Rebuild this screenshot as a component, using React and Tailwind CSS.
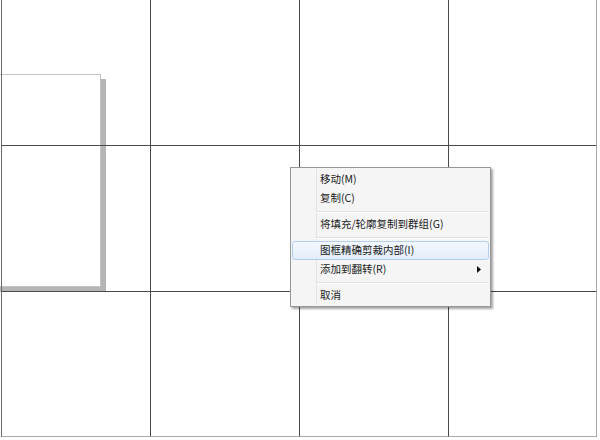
const cells = Array.from({ length: 12 }, (_, i) => i);

function MenuItem({ label, active, arrow }) {
  return (
    <div
      className={
        active
          ? "mx-[1px] h-[19px] flex items-center justify-between pl-[27px] pr-[7px] rounded-[3px] border border-[#b2cff0] bg-gradient-to-b from-[#f3f8fd] to-[#e3eefb]"
          : "mx-[1px] h-[19px] flex items-center justify-between pl-[27px] pr-[7px] border border-transparent"
      }
    >
      <span className="text-[10.5px] leading-none text-[#1a1a1a]">{label}</span>
      {arrow && (
        <svg width="4" height="7" viewBox="0 0 4 7">
          <path d="M0 0 L4 3.5 L0 7 Z" fill="#111" />
        </svg>
      )}
    </div>
  );
}

function Separator() {
  return (
    <div className="h-[7px] ml-[25px] mr-[2px] flex flex-col justify-center">
      <div className="h-px bg-[#e0e0e0]" />
      <div className="h-px bg-white" />
    </div>
  );
}

export default function App() {
  return (
    <div
      className="relative w-[600px] h-[440px] bg-white overflow-hidden"
      style={{ fontFamily: '"Noto Sans CJK SC", "Liberation Sans", sans-serif' }}
    >
      {/* page under the grid */}
      <div className="absolute left-[-10px] top-[74px] w-[111px] h-[213px] border border-[#c4c4c4] bg-white shadow-[5px_5px_0_#b5b5b5]" />

      {/* grid lines */}
      <div className="relative ml-[1px] -mt-[1px] border-l border-[#6a6a6a] grid grid-cols-[149px_149px_149px_148px] grid-rows-[147px_146px_145px]">
        {cells.map((i) => (
          <div
            key={i}
            className={[
              i % 4 === 3 ? "border-r border-r-[#a9a9a9]" : "border-r border-r-[#4a4a4a]",
              i >= 8 ? "border-b border-b-[#a9a9a9]" : "border-b border-b-[#4a4a4a]"
            ].join(" ")}
          />
        ))}
      </div>

      {/* context menu */}
      <div className="absolute left-[290px] top-[167px] w-[201px] pt-[2px] pb-[1px] border border-[#979797] bg-[#f5f5f5] shadow-[2px_2px_2px_rgba(0,0,0,0.35)]">
        <div className="absolute left-[25px] top-[1px] bottom-[1px] w-px bg-[#e2e3e3]" />
        <div className="relative">
          <MenuItem label="移动(M)" />
          <MenuItem label="复制(C)" />
          <Separator />
          <MenuItem label="将填充/轮廓复制到群组(G)" />
          <Separator />
          <MenuItem label="图框精确剪裁内部(I)" active />
          <MenuItem label="添加到翻转(R)" arrow />
          <Separator />
          <MenuItem label="取消" />
        </div>
      </div>
    </div>
  );
}
